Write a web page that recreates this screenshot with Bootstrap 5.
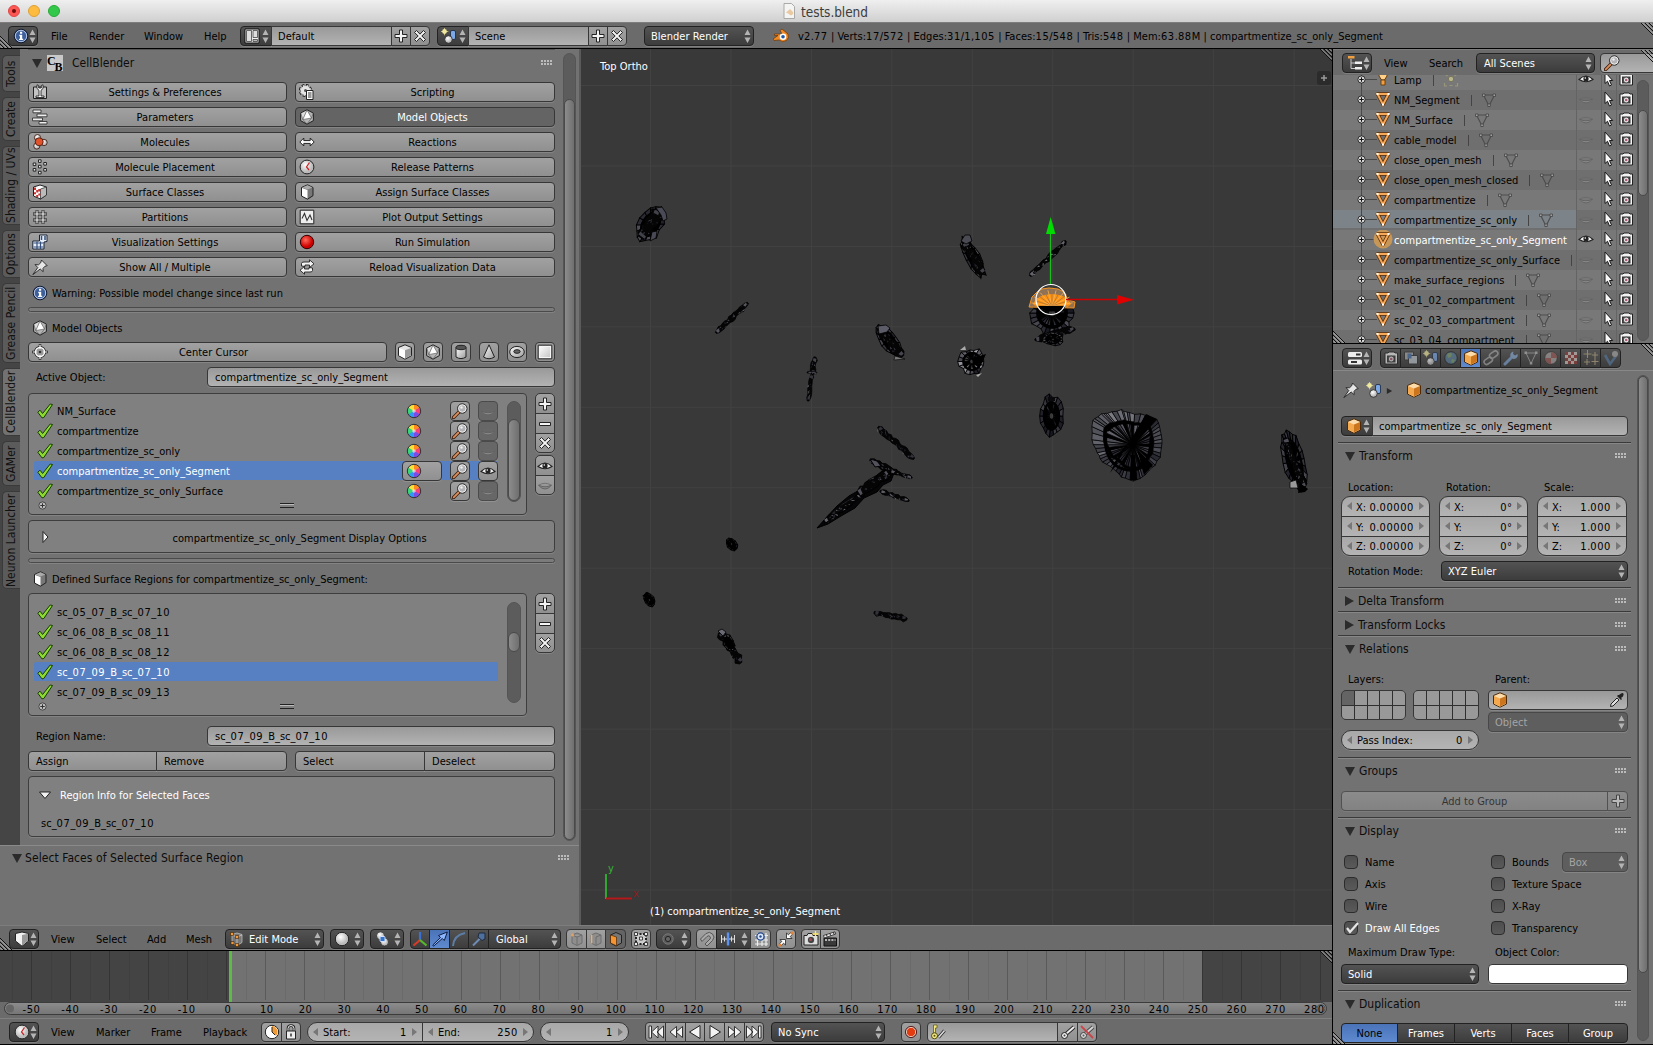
<!DOCTYPE html>
<html lang="en">
<head>
<meta charset="utf-8">
<title>tests.blend</title>
<link rel="stylesheet" href="https://cdn.jsdelivr.net/npm/bootstrap@5.3.0/dist/css/bootstrap.min.css">
<style>
:root{--fs:11px;--hfs:12px}
html,body{height:100%}
body{margin:0;overflow:hidden;background:#000;color:#000;font:var(--fs)/18px "DejaVu Sans Condensed","DejaVu Sans",sans-serif;font-stretch:condensed;letter-spacing:.02px;width:1653px;height:1045px}
body *{box-sizing:border-box}
svg{display:block;flex:none}
.ic{width:16px;height:16px;overflow:visible}
.ud{width:7px;height:16px;flex:none}
.dg,.tk{letter-spacing:.6px}
.titlebar{height:22px;background:linear-gradient(#efefef,#d0d0d0);font-size:13.5px;color:#3c3c3c;padding-left:8px}
.light{width:12px;height:12px;border-radius:50%;margin-right:8px}
.hdr{background:#6b6b6b;border-top:1px solid #7d7d7d;padding-top:1px}
.main{height:996px}
.leftcol{width:1332px}
.rightcol{width:320px;margin-left:1px;background:#727272}
.w{height:20px;border:1px solid #373737;border-radius:4px;background:linear-gradient(#a1a1a1,#909090);box-shadow:0 1px 0 rgba(255,255,255,.14);display:flex;align-items:center;white-space:nowrap;flex:none;position:relative;padding:2px 0 0}
.w .ic,.w .ud{margin-top:-2px}
.w.on{background:#646464;color:#fff}
.w.dk{background:linear-gradient(#535353,#3c3c3c);border-color:#222;color:#fff}
.w.blue{background:linear-gradient(#4a73b8,#5f8ad0);border-color:#222}
.w.fld{background:linear-gradient(#999,#b3b3b3)}
.w.num{background:linear-gradient(#a8a8a8,#b4b4b4);border-radius:10px;padding:2px 15px 0;justify-content:space-between}
.w.num:before,.w.num:after{content:"";position:absolute;top:5px;border:4px solid transparent}
.w.num:before{left:1px;border-right:5px solid #777}
.w.num:after{right:1px;border-left:5px solid #777}
.w.dim{background:#5e5e5e;color:#a5a5a5;border-color:#484848}
.w.lowl{background:#676767;border-color:#4b4b4b}
.w.ctr{justify-content:center}
.w>.text-center{padding-right:4px}
.w>.end{margin-left:auto;margin-right:2px}
.join>.w{border-radius:0;margin-right:-1px}
.join>.w:first-child{border-radius:4px 0 0 4px}
.join>.w:last-child{border-radius:0 4px 4px 0;margin-right:0}
.join>.w.num:first-child{border-radius:10px 0 0 10px}
.join>.w.num:last-child{border-radius:0 10px 10px 0}
.vjoin>.w{border-radius:0;height:21px;margin-bottom:-1px;justify-content:center}
.vjoin>.w:first-child{border-radius:5px 5px 0 0}
.vjoin>.w:last-child{border-radius:0 0 5px 5px;margin-bottom:0;height:20px}
.vjoin>.w.num{justify-content:space-between;height:21px}
.vjoin>.w.num:first-child{border-radius:9px 9px 0 0}
.vjoin>.w.num:last-child{border-radius:0 0 9px 9px;height:20px}
.mlabel{position:relative;top:1px;white-space:nowrap;flex:none}
/* tool shelf */
.shelf{width:581px;background:#727272;border-right:2px solid #5a5a5a}
.tabs{width:20px;background:#454545;padding:6px 0 0 2px;height:796px}
.vtab{width:18px;background:#5b5b5b;border:1px solid #3a3a3a;border-left:0;writing-mode:vertical-rl;transform:rotate(180deg);border-radius:0 5px 5px 0;text-align:center;line-height:16px;font-size:12px;color:#111;margin-bottom:5px;white-space:nowrap}
.vtab.act{background:#727272}
.pbody{width:542px;padding:0 7px 0 8px}
.ph{font-size:var(--hfs);color:#0c0c0c;display:flex;align-items:center}
.dots{width:12px;height:6px;margin-left:auto;background:radial-gradient(circle at 1px 1px,#bbb 0 .8px,transparent 1px) 0 0/3px 3px}
.tri-d{width:0;border:5px solid transparent;border-top:9px solid #2b2b2b;border-bottom:0}
.tri-r{width:0;border:5px solid transparent;border-left:9px solid #2b2b2b;border-right:0}
.sepbox{height:5px;border:1px solid #4a4a4a;border-radius:3px;background:#7b7b7b;box-shadow:0 1px 0 rgba(255,255,255,.12)}
.box{border:1px solid #3e3e3e;border-radius:4px;background:#808080;box-shadow:0 1px 0 rgba(255,255,255,.12)}
.lbl{height:20px;display:flex;align-items:center;padding:1px 0 0 0;white-space:nowrap}
.lbl .ic{margin-top:-2px}
.lrow{height:20px;width:464px;display:flex;align-items:center;padding-left:3px;white-space:nowrap}
.lrow.sel{color:#fff;background:linear-gradient(#5680c2,#5680c2) 0 0/100% 19px no-repeat;border-radius:2px}
.lrow>span{margin-left:4px;position:relative;top:1px}
.sb{background:#5c5c5c;border:1px solid #555;border-radius:7px}
.sb>div{background:linear-gradient(90deg,#8c8c8c,#6f6f6f);border:1px solid #4a4a4a;border-radius:7px}
.grip{width:14px;height:5px;border-top:1px solid #222;border-bottom:1px solid #222;background:linear-gradient(#bbb 1px,transparent 1px 2px,transparent 2px)}
.lfoot{height:8px;padding-left:4px}
.shelf .redo{height:80px;border-top:1px solid #8a8a8a;padding:2px 9px 0 10px}
.view{width:751px;background:#393939}
.corner{position:absolute;width:12px;height:12px}
/* timeline */
.tl{height:51px;background:#727272}
.ruler{height:13px;border:1px solid #3c3c3c;border-radius:7px;background:linear-gradient(#8c8c8c,#767676);margin:0 5px 0 4px}
/* outliner */
.orow{height:20px;display:flex;align-items:center;white-space:nowrap;position:relative}
.orow:nth-child(even){background:#6f6f6f}
.orow:nth-child(odd){background:#787878}
.nm{position:relative;top:1px}
.ocell{display:flex;align-items:center;width:243px;height:20px;overflow:hidden;padding-left:20px}
.ocell.hov{background:linear-gradient(#7c8389,#7c8389) 0 0/100% 18px no-repeat}
/* properties */
.sec{border-top:1px solid #3a3a3a;box-shadow:inset 0 1px 0 #878787;margin:0 5px 0 -3px;padding-left:7px}
.sec .ph{height:26px;padding-right:4px}
.chk{width:14px;height:14px;border:1px solid #2c2c2c;border-radius:4px;background:linear-gradient(#4e4e4e,#5a5a5a);flex:none}
.lay{display:grid;grid-template-columns:repeat(5,1fr);background:#2f2f2f;gap:1px;border:1px solid #373737;border-radius:5px;overflow:hidden;height:30px}
.lay>b{background:#999}
</style>
<script src="https://cdn.jsdelivr.net/npm/bootstrap@5.3.0/dist/js/bootstrap.bundle.min.js"></script>
</head>
<body>
<svg width="0" height="0" style="position:absolute">
<defs>
<linearGradient id="gw" x1="0" y1="0" x2="1" y2="1"><stop offset="0" stop-color="#fff"/><stop offset="1" stop-color="#999"/></linearGradient>
<radialGradient id="gr" cx=".4" cy=".35"><stop offset="0" stop-color="#ff6a5a"/><stop offset="1" stop-color="#c00"/></radialGradient>
<radialGradient id="gb" cx=".4" cy=".35"><stop offset="0" stop-color="#fff"/><stop offset="1" stop-color="#bbb"/></radialGradient>
<symbol id="ud" viewBox="0 0 7 16"><path d="M.5 7 3.500 1.500 6.500 7zM.5 9.500 3.500 15 6.500 9.500z" fill="#b4b4b4"/></symbol>
<symbol id="info" viewBox="0 0 16 16"><circle cx="8" cy="8" r="6.800" fill="#3d5f9c" stroke="#10182c"/><circle cx="8" cy="8" r="5.700" fill="none" stroke="#c6d2ea" stroke-width=".9"/><path d="M7 3.800h2.200v2H7zM6.300 6.800H9.200v4h1v1.300H6V10.800h1V8.200h-.7z" fill="#fff"/></symbol>
<symbol id="screen" viewBox="0 0 16 16"><path d="M1 1h14v14H1z" fill="#f2f2f2" stroke="#111"/><path d="M2.500 2.500h5v11h-5zM9 2.500h4.500v7H9z" fill="#ddd" stroke="#444" stroke-width=".8"/><path d="M9 11.500h4.500v2H9z" fill="#bbb" stroke="#444" stroke-width=".8"/></symbol>
<symbol id="scene" viewBox="0 0 16 16"><rect x="9.500" y="2.500" width="5" height="9" rx="1.500" fill="#7da8e6" stroke="#18243c" stroke-width=".8"/><circle cx="7.500" cy="11.500" r="3.800" fill="url(#gb)" stroke="#222" stroke-width=".8"/><circle cx="3.500" cy="3.500" r="2.400" fill="#f2eaa0"/><path d="M3.500-.3v7.600M-.3 3.500h7.600" stroke="#efe89a" stroke-width=".7"/></symbol>
<symbol id="plus" viewBox="0 0 16 16"><path d="M6.500 2h3v4.500H14v3H9.500V14h-3V9.500H2v-3h4.500z" fill="#f4f4f4" stroke="#222"/></symbol>
<symbol id="minus" viewBox="0 0 16 16"><path d="M2.500 6.500h11v3h-11z" fill="#f4f4f4" stroke="#222"/></symbol>
<symbol id="x" viewBox="0 0 16 16"><path d="M2.500 4.500 4.500 2.500 8 6.200 11.500 2.500 13.500 4.500 9.800 8 13.500 11.500 11.500 13.500 8 9.800 4.500 13.500 2.500 11.500 6.200 8z" fill="#f4f4f4" stroke="#222"/></symbol>
<symbol id="blender" viewBox="0 0 16 16"><path d="M7 2.500 9 1l6 5q1.500 4-1.500 6.500-4 2.500-7.500-.5L1 12.500 0 11l5-3.500H1.500V6H9z" fill="#ef8a24" stroke="#6a3206" stroke-width=".7"/><circle cx="10" cy="8.800" r="3.300" fill="#fff"/><circle cx="10" cy="8.800" r="1.800" fill="#22589c"/></symbol>
<symbol id="doc" viewBox="0 0 16 16"><path d="M3 .5h7.500l3 3v12H3z" fill="#f4f4f2" stroke="#999" stroke-width=".8"/><path d="M5 9.500 9 6l3 3a2 2 0 0 1-4 2z" fill="#e9c9a2"/></symbol>
<symbol id="wrench" viewBox="0 0 16 16"><path d="M1.500 3h13v11.500h-13z" fill="#c4c4c4" stroke="#222"/><path d="M5 .8v3.700L7 6.300V12H4v1.500h8V12H9V6.300l2-1.800V.8L9.300 1.500V4H6.700V1.500z" fill="#fff" stroke="#111" stroke-width=".8"/></symbol>
<symbol id="script" viewBox="0 0 16 16"><circle cx="6.500" cy="6.500" r="5" fill="none" stroke="#222" stroke-width="3.200" stroke-dasharray="2.400 1.500"/><circle cx="6.500" cy="6.500" r="4.600" fill="#e4e4e4" stroke="#e4e4e4" stroke-width="2" stroke-dasharray="1.600 2.100"/><circle cx="6.500" cy="6.500" r="1.500" fill="#555"/><path d="M7.500 6.500H14v9H7.500z" fill="#fff" stroke="#222"/><path d="M9 9h3.500M9 11h3.500M9 13h3.500" stroke="#333"/></symbol>
<symbol id="params" viewBox="0 0 16 16"><g fill="#eee" stroke="#333" stroke-width=".9"><path d="M1 1h8v2.800H1zM5 5h10v2.800H5zM.5 9h10v2.800H.5zM7 12.500h8v2.500H7z"/></g></symbol>
<symbol id="mol" viewBox="0 0 16 16"><g stroke="#3a1208" stroke-width=".8"><circle cx="5.500" cy="3.600" r="3.100" fill="url(#gb)"/><circle cx="4.800" cy="12" r="3.100" fill="url(#gb)"/><circle cx="12" cy="8.500" r="3.200" fill="url(#gb)"/><circle cx="7.200" cy="7.800" r="4" fill="#e2532c"/></g></symbol>
<symbol id="place" viewBox="0 0 16 16"><g fill="#eee" stroke="#222"><path d="M6.500.800h2.600v2.600H6.500zM1.200 4h2.600v2.600H1.200zM11.800 3.500h2.600v2.600h-2.600zM6.500 6.300h2.600v2.600H6.500zM1.200 9.500h2.600v2.600H1.200zM11.800 9.500h2.600v2.600h-2.600zM6.500 12.300h2.600v2.600H6.500z"/></g></symbol>
<symbol id="surf" viewBox="0 0 16 16"><path d="M1.500 3 8 1l6.500 2v8L8.500 15l-7-3z" fill="#fff" stroke="#222"/><path d="M8.500 5l6-2v8l-6 4z" fill="#bbb" stroke="#222" stroke-width=".7"/><path d="M2 3.500h2v2.500H2zM6.300 5h2v2.500h-2zM4.200 6h2v2.500h-2zM2 8.300h2v2H2zM6.300 9.500h2v2h-2zM4.200 11h2v2h-2z" fill="#c33"/></symbol>
<symbol id="hash" viewBox="0 0 16 16"><path d="M5 1v14M11 1v14M1 5h14M1 11h14" stroke="#222" stroke-width="2.800"/><path d="M5 1.500v13M11 1.500v13M1.500 5h13M1.500 11h13" stroke="#eee" stroke-width="1.200"/></symbol>
<symbol id="film" viewBox="0 0 16 16"><path d="M7.500 1H15v6.500l-3 .5v7H.8V7h6.700z" fill="#e8eef8" stroke="#1a2436"/><path d="M1.500 9h10M1.500 13h10M5 7.500V15M8.500 7.500V15" stroke="#33507c" stroke-width="1.200"/><path d="M9.500 2v4M13 2v4" stroke="#33507c" stroke-width="1.500"/></symbol>
<symbol id="pin" viewBox="0 0 16 16"><path d="M9.500 1 15.200 6.700l-2.200.5-2 2.200.2 3.300-3-2.700L.8 15.700l5-7.200L3 5.600l3.500.2 2.200-2z" fill="#e6e6e6" stroke="#222" stroke-width=".9" stroke-linejoin="round"/></symbol>
<symbol id="ico" viewBox="0 0 16 16"><path d="M8 .8l6.400 3.300v7.500L8 15.200l-6.400-3.600V4.100z" fill="#b4b4b4" stroke="#222"/><path d="M8 1.500 3.800 10.500 12.500 9z" fill="#fff"/><path d="M2.100 4.500 3.600 10.200 7.500 1.700z" fill="#ddd"/><path d="M1.800 4.200 3.800 10.500 8 15l4.500-6 1.700-4.800M3.800 10.500 12.500 9 8 1z" fill="none" stroke="#555" stroke-width=".6"/></symbol>
<symbol id="react" viewBox="0 0 16 16"><path d="M.8 8 4.800 4v2.600h6.400V4L15.200 8l-4 4V9.400H4.800V12z" fill="#fff" stroke="#222"/></symbol>
<symbol id="clock" viewBox="0 0 16 16"><circle cx="8" cy="8" r="6.900" fill="url(#gb)" stroke="#222"/><path d="M10.500 3.500 7.500 8l2.500 3" stroke="#c22" stroke-width="1.200" fill="none"/></symbol>
<symbol id="cube" viewBox="0 0 16 16"><path d="M8 .8l6.500 2.700v8.200L8 15.200l-6.500-3.500V3.500z" fill="#e4e4e4" stroke="#222"/><path d="M2 4 8 6.300V14.500l-6-3.200z" fill="#fff"/><path d="M14 4 8 6.300V14.500l6-3.200z" fill="#9a9a9a"/></symbol>
<symbol id="cube2" viewBox="0 0 16 16"><path d="M2.500 3.500 8.500.8l5.500 2.700v8.200L8.500 15.200l-6-3.200z" fill="#777" stroke="#222"/><path d="M3 4 8.500 6v8.500L3 11.700z" fill="#fff"/><path d="M3 3.500 8.500 1.300l5 2.200-5 2z" fill="#aaa"/></symbol>
<symbol id="ocube" viewBox="0 0 16 16"><path d="M8 .8l6.500 2.700v8.500L8 15.200l-6.500-3.200V3.500z" fill="#fddcab" stroke="#4e2a06"/><path d="M2 4 8 6.600v7.900l-6-3z" fill="#f5a94e"/><path d="M14 4 8 6.600v7.900l6-3z" fill="#cb751e"/></symbol>
<symbol id="plot" viewBox="0 0 16 16"><path d="M1.200 1.200h13.600v13.600H1.200z" fill="#eee" stroke="#222"/><path d="M3 9.500 5.500 4.500l2.500 7 3-5.500 2 5" fill="none" stroke="#333" stroke-width="1.100"/></symbol>
<symbol id="rec" viewBox="0 0 16 16"><circle cx="8" cy="8" r="6.700" fill="url(#gr)" stroke="#300"/></symbol>
<symbol id="rec2" viewBox="0 0 16 16"><circle cx="8" cy="8" r="4.700" fill="#e23c10" stroke="#f4cfc0" stroke-width="1"/><circle cx="8" cy="8" r="5.600" fill="none" stroke="#400" stroke-width=".8"/></symbol>
<symbol id="reload" viewBox="0 0 16 16"><path d="M2.500 7V4.500Q2.500 3 5 3h5.500V.8L15 4.800 10.500 8.500V6H6v1.500zM13.500 9v2.500q0 1.500-2.500 1.500H5.500v2.200L1 11.200 5.500 7.500V10H10V8.500z" fill="#f4f4f4" stroke="#222" stroke-width=".9"/></symbol>
<symbol id="cursor3d" viewBox="0 0 16 16"><circle cx="8" cy="8" r="4.500" fill="none" stroke="#222" stroke-width="3"/><path d="M8 0v16M0 8h16" stroke="#222" stroke-width="2.500"/><circle cx="8" cy="8" r="4.500" fill="#999" stroke="#fff" stroke-width="1.400"/><path d="M8 .7v4M8 11.300v4M.7 8h4M11.300 8h4" stroke="#fff" stroke-width="1.200"/><circle cx="8" cy="8" r="1.300" fill="#333"/></symbol>
<symbol id="cyl" viewBox="0 0 16 16"><path d="M3 3.500v9.500q5 3.200 10 0V3.500z" fill="url(#gw)" stroke="#222"/><ellipse cx="8" cy="3.500" rx="5" ry="2.200" fill="#555" stroke="#222"/></symbol>
<symbol id="cone" viewBox="0 0 16 16"><path d="M8 .8 2.500 13q5.500 3.500 11 0z" fill="url(#gw)" stroke="#222"/></symbol>
<symbol id="torus" viewBox="0 0 16 16"><ellipse cx="8" cy="8" rx="7.300" ry="5.600" fill="url(#gw)" stroke="#222"/><ellipse cx="8" cy="7.500" rx="3.200" ry="1.800" fill="#666" stroke="#222"/></symbol>
<symbol id="plane" viewBox="0 0 16 16"><path d="M1.200 1.200h13.600v13.600H1.200z" fill="#f6f6f6" stroke="#222"/><path d="M3 3h10v10H3z" fill="url(#gw)" opacity=".5"/></symbol>
<symbol id="check" viewBox="0 0 16 16"><path d="M.8 9.200 3 7.200l2.600 3.300L13.200 1l2.300.5L6.800 14.500 5 14.900z" fill="#8bdc2e" stroke="#173b04"/></symbol>
<symbol id="eye" viewBox="0 0 16 16"><path d="M1 8.500Q8 1.500 15 8.500 8 13 1 8.500z" fill="#f6f6f6" stroke="#222" stroke-width="1.100"/><circle cx="8" cy="7.700" r="2.600" fill="#222"/><circle cx="7.300" cy="7" r=".8" fill="#fff"/></symbol>
<symbol id="eyec" viewBox="0 0 16 16"><path d="M1.500 8Q4 12 8 12t6.500-4Q11 10 8 9.800 5 10 1.500 8z" fill="#8c8c8c" stroke="#606060" stroke-width=".9"/><path d="M2 8q6-3.500 12 0" fill="none" stroke="#6a6a6a" stroke-width=".8"/></symbol>
<symbol id="lens" viewBox="0 0 16 16"><path d="M1.500 14.500 7 9" stroke="#3b1d0c" stroke-width="3.400" stroke-linecap="round"/><path d="M1.700 14.300 7 9" stroke="#d98e5c" stroke-width="1.800" stroke-linecap="round"/><circle cx="10.300" cy="5.500" r="4.700" fill="#b4b4b8" stroke="#222"/><circle cx="10.300" cy="5.500" r="3.700" fill="none" stroke="#f4f4f4" stroke-width=".9"/><circle cx="9.500" cy="4.500" r="1.200" fill="#eee"/></symbol>
<symbol id="cw" viewBox="0 0 16 16"><g><path d="M8 8V1.500A6.500 6.500 0 0 1 13.600 4.700z" fill="#ff8a20"/><path d="M8 8l5.600-3.300a6.500 6.500 0 0 1 0 6.500z" fill="#ff3b78"/><path d="M8 8l5.600 3.200A6.500 6.500 0 0 1 8 14.500z" fill="#7a4be8"/><path d="M8 8v6.500a6.500 6.500 0 0 1-5.600-3.300z" fill="#2f9bf0"/><path d="M8 8l-5.600 3.200a6.500 6.500 0 0 1 0-6.500z" fill="#38d878"/><path d="M8 8 2.400 4.700A6.500 6.500 0 0 1 8 1.500z" fill="#f4e23c"/></g><circle cx="8" cy="8" r="1.800" fill="#fff" opacity=".6"/><circle cx="8" cy="8" r="6.700" fill="none" stroke="#333"/></symbol>
<symbol id="shape" viewBox="0 0 16 16"><path d="M1.500 2.500 8 1l6.500 1.500V10L8 15.200 1.500 10z" fill="#f2f2f2" stroke="#222"/><path d="M8 4l6-1.200v7L8 14.500z" fill="#999"/></symbol>
<symbol id="tree" viewBox="0 0 16 16"><path d="M4 4v9.500h4M4 8h4" stroke="#ccc" fill="none"/><path d="M1 1h6.500v2.500H1z" fill="#f0a040"/><path d="M8 6.500h7V9H8zM8 12h7v2.500H8z" fill="#eee"/></symbol>
<symbol id="props" viewBox="0 0 16 16"><rect x="1" y="2" width="14" height="5" rx="1.500" fill="#eee"/><rect x="1" y="9.500" width="14" height="5" rx="1.500" fill="#eee"/><path d="M9 3.500h4.500v2H9zM4 11h6v2H4z" fill="#333"/></symbol>
<symbol id="edit" viewBox="0 0 16 16"><path d="M3 3.500 8 2l5 1.500v8L8 14.500l-5-3z" fill="#777" stroke="#bbb" stroke-width=".8"/><path d="M3 4l5 2 5-2M8 6v8" stroke="#ccc" fill="none" stroke-width=".8"/><path d="M1.500 1.500h3v3h-3zM6.500 4.500h3v3h-3zM2 10.500h3v3H2zM6.500 12.500h3v3h-3z" fill="#f29a3a" stroke="#3a1c00" stroke-width=".6"/></symbol>
<symbol id="ball" viewBox="0 0 16 16"><circle cx="8" cy="8" r="6.700" fill="url(#gb)" stroke="#222"/></symbol>
<symbol id="pivot" viewBox="0 0 16 16"><circle cx="6.500" cy="4.800" r="4" fill="url(#gb)" stroke="#222" stroke-width=".7"/><circle cx="10.500" cy="11" r="4" fill="url(#gb)" stroke="#222" stroke-width=".7"/><rect x="6" y="5.500" width="5" height="5" rx="1" fill="#3272c8" stroke="#dce8ff" stroke-width=".9"/></symbol>
<symbol id="axes" viewBox="0 0 16 16"><path d="M8 9V1" stroke="#3b6fd0" stroke-width="2.200"/><path d="M8 9 1.500 14.500" stroke="#d83a28" stroke-width="2.200"/><path d="m8 9 6.500 5.500" stroke="#54b92d" stroke-width="2.200"/></symbol>
<symbol id="arrow" viewBox="0 0 16 16"><path d="M1.500 15.200.8 14 8.500 6.500 6.500 4.500 15.300 1l-3 8.500-2-2z" fill="#8db6ff" stroke="#0c1d44"/></symbol>
<symbol id="arc" viewBox="0 0 16 16"><path d="M2 15Q3 4 14 2" stroke="#5d7da6" stroke-width="2" fill="none"/></symbol>
<symbol id="scl" viewBox="0 0 16 16"><path d="M2 14.500 9 7.500" stroke="#6f8cb4" stroke-width="2"/><path d="M8 2h6v6l-3 1.500L7 6z" fill="#4f6f9c" stroke="#1d2a3f"/></symbol>
<symbol id="mv" viewBox="0 0 16 16"><path d="M3 4 8 2l5 2v8l-5 2.500L3 12zM3 4l5 2 5-2M8 6v8" fill="#8e8e8e" stroke="#6c6c6c"/><circle cx="3.500" cy="4" r="1.600" fill="#e0a060"/></symbol>
<symbol id="me" viewBox="0 0 16 16"><path d="M3 4 8 2l5 2v8l-5 2.500L3 12zM8 6l5-2M8 6v8" fill="#8e8e8e" stroke="#6c6c6c"/><path d="M3.500 3.500v9" stroke="#e0b080" stroke-width="1.500"/></symbol>
<symbol id="mf" viewBox="0 0 16 16"><path d="M2.500 4 8 1.500l5.500 2.500v8L8 15l-5.500-3z" fill="#777" stroke="#222"/><path d="M2.500 4l6 2v8.800l-6-2.800z" fill="#f49432" stroke="#4c2604" stroke-width=".7"/></symbol>
<symbol id="occl" viewBox="0 0 16 16"><path d="M3 3h10v10H3z" fill="#ccc" stroke="#222" stroke-width="2" stroke-dasharray="2 1.500"/><path d="M1.500 1.500h3v3h-3zM11.500 1.500h3v3h-3zM1.500 11.500h3v3h-3zM11.500 11.500h3v3h-3zM6.500 6h3v3h-3z" fill="#eee" stroke="#222" stroke-width=".8"/></symbol>
<symbol id="prop" viewBox="0 0 16 16"><circle cx="8" cy="8" r="5.200" fill="#5c5c5c" stroke="#777"/><circle cx="8" cy="8" r="2.600" fill="#666" stroke="#222"/></symbol>
<symbol id="magnet" viewBox="0 0 16 16"><path d="M3 10.500 8 5.500q2-1.500 3 0t0 2.500l-5 5 2 2 5.500-5.500q3-3.500 0-6.500t-6.500-.5L1.500 8z" fill="#aaa" stroke="#555"/></symbol>
<symbol id="snapi" viewBox="0 0 16 16"><path d="M1.500 4v8M14.500 4v8M4.500 5.500v5M11.500 5.500v5M1.500 8h13" stroke="#ddd"/><path d="M8 1.500v13" stroke="#5b93f0" stroke-width="2.400"/></symbol>
<symbol id="snapg" viewBox="0 0 16 16"><path d="M2 4.500h13M2 9h13M2 13h13M4.500 2v13M9 2v13M13 2v13" stroke="#eee" stroke-width="1.200"/><circle cx="7.500" cy="5.500" r="3.600" fill="#dce8fa" stroke="#24498c" stroke-width="1.300"/><circle cx="7.500" cy="5.500" r="1.200" fill="#24498c"/></symbol>
<symbol id="snapt" viewBox="0 0 16 16"><path d="M8.500 7.500V2l2 1.800L13 1.200 14.800 3l-2.600 2.500L14 7.500zM7.500 8.500V14l-2-1.800L3 14.800 1.200 13l2.600-2.500L2 8.500z" fill="#fff" stroke="#222" stroke-width=".8"/><circle cx="14" cy="2" r="1.600" fill="#e58334"/><circle cx="2" cy="14" r="1.600" fill="#e58334"/></symbol>
<symbol id="cam" viewBox="0 0 16 16"><path d="M1 4.500h3l1-2h4l1 2h5V14H1z" fill="#ddd" stroke="#222"/><circle cx="8" cy="9" r="3.800" fill="#444" stroke="#fff" stroke-width=".8"/><circle cx="7.500" cy="8.500" r="1.500" fill="#a05058"/><path d="M12.500 0v6M9.500 3h6" stroke="#ffe56a" stroke-width="1.300"/></symbol>
<symbol id="clap" viewBox="0 0 16 16"><path d="M2 7h12.500v8H2z" fill="#3a3a3a" stroke="#111"/><path d="M1.500 4.500 13 .8l.8 2.200L2.300 7z" fill="#eee" stroke="#222" stroke-width=".8"/><path d="M3 9h10.500" stroke="#ddd" stroke-width="1.500" stroke-dasharray="2 1.200"/><path d="M5 5.500l-.5-2M8.500 4.500l-.5-2M12 3.300l-.5-2" stroke="#222"/></symbol>
<symbol id="rcam" viewBox="0 0 16 16"><path d="M2 3h3l1-1h5l1 1h2.500v11h-12.500z" fill="#f2f2f2" stroke="#222"/><path d="M4 5.500h8.500v7H4z" fill="#3a3a3a"/><circle cx="8.200" cy="9" r="2.900" fill="#e8e8e8" stroke="#222" stroke-width=".7"/><circle cx="8.200" cy="9" r="1.300" fill="#b05a74"/></symbol>
<symbol id="ptr" viewBox="0 0 16 16"><path d="M5 1v11.500l2.500-2.200 2 4.700 2-1-2-4.500h3.200z" fill="#f8f8f8" stroke="#1a1a1a"/></symbol>
<symbol id="omesh" viewBox="0 0 16 16"><path d="M2.500 3h11L8 13.500z" fill="none" stroke="#5b2e06" stroke-width="3.600" stroke-linejoin="round"/><path d="M2.500 3h11L8 13.500z" fill="none" stroke="#f5a85a" stroke-width="2"/><path d="M1.500 2h2v2h-2zM12.500 2h2v2h-2zM7 12.500h2v2H7z" fill="#fff"/></symbol>
<symbol id="gmesh" viewBox="0 0 16 16"><path d="M2.500 3h11L8 14z" fill="none" stroke="#4c4c4c" stroke-width="1.100"/><path d="M1.500 2h2.500v2.500H1.500zM12 2h2.500v2.500H12zM6.800 12h2.500v2.500H6.800z" fill="#a0a0a0" stroke="#444" stroke-width=".8"/></symbol>
<symbol id="lampo" viewBox="0 0 16 16"><path d="M4 1h8v4l-2.500 4h-3L4 5z" fill="#ffd08a" stroke="#6a3a06"/><path d="M6 9h4v5H6z" fill="#f0a040" stroke="#5a3006" stroke-width=".8"/></symbol>
<symbol id="lampg" viewBox="0 0 16 16"><circle cx="8" cy="7" r="2.700" fill="#b7b48e" stroke="#77755a"/><path d="M2 2l2.500 2M14 2l-2.500 2M1.500 11v3H4M14.500 11v3H12M6.500 13.500h3" stroke="#99967a" stroke-width="1.200" fill="none"/></symbol>
<symbol id="exp" viewBox="0 0 10 10"><circle cx="5" cy="5" r="4" fill="#ddd" stroke="#222"/><path d="M5 2.500v5M2.500 5h5" stroke="#111" stroke-width="1.200"/></symbol>
<symbol id="rl" viewBox="0 0 16 16"><path d="M1.500 2h9v8h-9z" fill="#aaa" stroke="#333"/><path d="M5.500 5.500h9V14h-9z" fill="#bcc4cc" stroke="#333"/><path d="M4.500 3.500h4v5h-4z" fill="#4c74ac"/></symbol>
<symbol id="world" viewBox="0 0 16 16"><circle cx="8" cy="8" r="6.300" fill="#5c7f9c" stroke="#222"/><path d="M4 4q3-2 5 0l-1 3-3 1zM9 9l3 1-2 3-2-1z" fill="#7ea06c"/></symbol>
<symbol id="chain" viewBox="0 0 16 16"><g fill="none" stroke="#a4a4a4" stroke-width="1.600"><rect x="6.500" y="2" width="9" height="5" rx="2.500" transform="rotate(-35 11 5)"/><rect x=".8" y="8.500" width="9" height="5" rx="2.500" transform="rotate(-35 5 11)"/></g></symbol>
<symbol id="spanner" viewBox="0 0 16 16"><path d="M2 14 10 6" stroke="#7da2cf" stroke-width="3" stroke-linecap="round"/><path d="M14.500 4a3.700 3.700 0 1 1-4-2.500L10 4l2 1.500z" fill="#8aaad2"/></symbol>
<symbol id="dmesh" viewBox="0 0 16 16"><path d="M3 3h10L8 13.500z" fill="none" stroke="#a5a5a5"/><path d="M1.500 1.500H4V4H1.500zM12 1.500h2.500V4H12zM6.800 12h2.500v2.500H6.800z" fill="#b5b5b5"/></symbol>
<symbol id="mat" viewBox="0 0 16 16"><circle cx="8" cy="8" r="6.300" fill="#a8a0a0" stroke="#333"/><path d="M8 8V2a6 6 0 0 1 6 6zM8 8v6a6 6 0 0 1-6-6z" fill="#9c5a56"/></symbol>
<symbol id="tex" viewBox="0 0 16 16"><path d="M2 2h12v12H2z" fill="#d0c4c0"/><path d="M2 2h3v3H2zM8 2h3v3H8zM5 5h3v3H5zM11 5h3v3h-3zM2 8h3v3H2zM8 8h3v3H8zM5 11h3v3H5zM11 11h3v3h-3z" fill="#943c38"/></symbol>
<symbol id="part" viewBox="0 0 16 16"><path d="M4.500 0v8M.5 4h8M12 2v6M9 5h6M4 9v6M1 12h6M12 8v7M8.500 11.500h7" stroke="#b5a682" stroke-width="1.100"/></symbol>
<symbol id="phys" viewBox="0 0 16 16"><path d="M2 5l5 9 6-8" stroke="#56789c" stroke-width="2.600" fill="none"/><circle cx="12" cy="4" r="3" fill="#a8a8a8"/></symbol>
<symbol id="drop" viewBox="0 0 16 16"><path d="M1.500 14.500 2 12l6-6 2 2-6 6z" fill="#ddd" stroke="#111" stroke-width=".9"/><path d="M8 4l4 4 1-1-1-1q3-1.500 2.500-4T10 3L9 3z" fill="#222"/></symbol>
<symbol id="tlc" viewBox="0 0 16 16"><circle cx="8" cy="8" r="6.700" fill="#fff" stroke="#222"/><path d="M8 8V2a6 6 0 0 1 4 10z" fill="#f29a34"/><path d="M8 3v5l3 3" stroke="#222" fill="none"/></symbol>
<symbol id="lock" viewBox="0 0 16 16"><path d="M5 7V4.500q0-3 3-3t3 3V7" fill="none" stroke="#222" stroke-width="2.600"/><path d="M5 7V4.500q0-3 3-3t3 3V7" fill="none" stroke="#eee"/><path d="M3.500 7h9v8h-9z" fill="#eee" stroke="#222"/><path d="M8 9.500v3" stroke="#222" stroke-width="1.400"/></symbol>
<g id="fwdshape" fill="#f4f4f4" stroke="#222" stroke-width=".9"><path d="M1.500 2.500v11L8 8zM7.500 2.500v11L14 8z"/></g>
<symbol id="ff" viewBox="0 0 16 16"><use href="#fwdshape"/></symbol>
<symbol id="rw" viewBox="0 0 16 16"><use href="#fwdshape" transform="matrix(-1 0 0 1 16 0)"/></symbol>
<symbol id="last" viewBox="0 0 16 16"><path d="M.5 2v12L7 8zM6 2v12l6.500-6zM12.500 2h2.500v12h-2.500z" fill="#f4f4f4" stroke="#222" stroke-width=".9"/></symbol>
<symbol id="first" viewBox="0 0 16 16"><path d="M15.500 2v12L9 8zM10 2v12L3.500 8zM1 2h2.500v12H1z" fill="#f4f4f4" stroke="#222" stroke-width=".9"/></symbol>
<symbol id="play" viewBox="0 0 16 16"><path d="M3 1.500v13L13.500 8z" fill="#f4f4f4" stroke="#222"/></symbol>
<symbol id="back" viewBox="0 0 16 16"><path d="M13 1.500v13L2.500 8z" fill="#f4f4f4" stroke="#222"/></symbol>
<symbol id="keyset" viewBox="0 0 16 16"><path d="M3.500 9V1h3.500v3H5.500v5z" fill="#f4e884" stroke="#55500c" stroke-width=".7"/><circle cx="4.500" cy="11.800" r="3" fill="#f4e884" stroke="#55500c"/><circle cx="4.500" cy="11.800" r="1" fill="#55500c"/><path d="M8.500 13.500 14.500 6.500" stroke="#222" stroke-width="3.200"/><path d="M8.500 13.500 14.500 6.500" stroke="#ddd" stroke-width="1.600"/></symbol>
<symbol id="key" viewBox="0 0 16 16"><path d="M5.500 10.500 14 3" stroke="#222" stroke-width="3.800"/><path d="M5.500 10.500 14 3" stroke="#eee" stroke-width="2"/><circle cx="4.500" cy="11.500" r="3" fill="#eee" stroke="#222"/><circle cx="4.500" cy="11.500" r="1" fill="#444"/></symbol>
<symbol id="keyx" viewBox="0 0 16 16"><use href="#key" width="16" height="16" opacity=".7"/><path d="M2 2l12 12" stroke="#c8444a" stroke-width="1.800"/></symbol>
<symbol id="td" viewBox="0 0 16 16"><path d="M2.500 5h11L8 11.500z" fill="#f2f2f2" stroke="#222"/></symbol>
<symbol id="tr" viewBox="0 0 16 16"><path d="M6 2.500v11L11 8z" fill="#f2f2f2" stroke="#222"/></symbol>
<symbol id="cb" viewBox="0 0 16 16"><path d="M0 0h16v16H0z" fill="#c9c9c9"/><text x="0" y="10" font-family="Liberation Serif" font-weight="bold" font-size="12">C</text><text x="7.500" y="15.500" font-family="Liberation Serif" font-weight="bold" font-size="12">B</text></symbol>
<symbol id="cnr" viewBox="0 0 12 12"><path d="M0 0 12 12M4 0l8 8M8 0l4 4" stroke="#111" stroke-width="1"/><path d="M1.500 0 12 10.500M5.500 0 12 6.500M9.500 0 12 2.500" stroke="#c4c4c4" stroke-width=".9"/></symbol>
<symbol id="cnl" viewBox="0 0 12 12"><path d="M0 0 12 12M0 4l8 8M0 8l4 4" stroke="#111" stroke-width="1"/><path d="M0 1.500 10.500 12M0 5.500 6.500 12M0 9.500 2.500 12" stroke="#c4c4c4" stroke-width=".9"/></symbol>
</defs></svg>

<div class="titlebar d-flex align-items-center position-relative">
  <div class="light" style="background:#fc5753;border:1px solid #df4744"><div class="rounded-circle" style="width:4px;height:4px;margin:3px;background:#6b0d0b"></div></div>
  <div class="light" style="background:#fdbc40;border:1px solid #de9f34"></div>
  <div class="light" style="background:#34c84a;border:1px solid #27aa35"></div>
  <div class="d-flex align-items-center" style="margin-left:713px"><i data-i="doc"></i><span style="margin-left:4px;letter-spacing:-.05px" class="mlabel">tests.blend</span></div>
</div>

<header class="hdr d-flex align-items-center position-relative" style="height:26px;padding-left:8px">
  <div class="w dk" style="width:30px;padding-left:4px"><i data-i="info"></i><i data-i="ud" class="end"></i></div>
  <span class="mlabel" style="margin-left:13px;width:38px">File</span><span class="mlabel" style="width:55px">Render</span><span class="mlabel" style="width:60px">Window</span><span class="mlabel" style="width:36px">Help</span>
  <div class="join d-flex">
    <div class="w dk" style="width:32px;padding-left:3px"><i data-i="screen"></i><i data-i="ud" class="end"></i></div>
    <div class="w fld" style="width:121px;padding-left:6px">Default</div>
    <div class="w ctr" style="width:20px"><i data-i="plus"></i></div><div class="w ctr" style="width:20px"><i data-i="x"></i></div>
  </div>
  <div class="join d-flex" style="margin-left:7px">
    <div class="w dk" style="width:32px;padding-left:3px"><i data-i="scene"></i><i data-i="ud" class="end"></i></div>
    <div class="w fld" style="width:121px;padding-left:6px">Scene</div>
    <div class="w ctr" style="width:20px"><i data-i="plus"></i></div><div class="w ctr" style="width:20px"><i data-i="x"></i></div>
  </div>
  <div class="w dk" style="width:110px;margin-left:17px;padding-left:6px">Blender Render<i data-i="ud" class="end"></i></div>
  <i data-i="blender" style="margin-left:19px"></i>
  <span class="mlabel" style="margin-left:9px">v2.77 | Verts:17/572 | Edges:31/1,105 | Faces:15/548 | Tris:548 | Mem:63.88M | compartmentize_sc_only_Segment</span>
  <svg class="corner" style="right:0;top:0"><use href="#cnr"/></svg>
  <svg class="corner" style="left:0;bottom:0"><use href="#cnl"/></svg>
</header>

<div class="main d-flex" style="border-top:1px solid #000">
 <div class="leftcol d-flex flex-column">
  <div class="d-flex" style="height:876px">
   <aside class="shelf">
    <div class="d-flex" style="height:796px">
     <div class="tabs" id="tabs"></div>
     <div class="pbody">
      <div class="ph" style="height:29px;padding:0 0 2px 4px;border-top:1px solid #555"><div class="tri-d"></div><i data-i="cb" style="margin-left:5px"></i><span style="margin-left:9px">CellBlender</span><div class="dots" style="margin-right:2px"></div></div>
      <div class="d-flex flex-wrap" id="mods" style="padding-top:4px;gap:5px 8px"></div>
      <div class="lbl" style="margin-top:6px;padding-left:4px"><i data-i="info"></i><span style="margin-left:4px">Warning: Possible model change since last run</span></div>
      <div class="sepbox" style="margin-top:4px"></div>
      <div class="lbl" style="margin-top:6px;padding-left:4px"><i data-i="ico"></i><span style="margin-left:4px">Model Objects</span></div>
      <div class="d-flex justify-content-between" style="margin-top:4px">
       <div class="w" style="width:359px;padding-left:3px"><i data-i="cursor3d"></i><span class="flex-fill text-center" style="padding-right:7px">Center Cursor</span></div>
       <div class="w ctr" style="width:20px"><i data-i="cube"></i></div><div class="w ctr" style="width:20px"><i data-i="ico"></i></div><div class="w ctr" style="width:20px"><i data-i="cyl"></i></div><div class="w ctr" style="width:20px"><i data-i="cone"></i></div><div class="w ctr" style="width:20px"><i data-i="torus"></i></div><div class="w ctr" style="width:20px"><i data-i="plane"></i></div>
      </div>
      <div class="d-flex" style="margin-top:5px"><span class="lbl" style="width:179px;padding:2px 0 0 8px">Active Object:</span><div class="w fld flex-fill" style="padding-left:7px">compartmentize_sc_only_Segment</div></div>
      <div class="d-flex justify-content-between" style="margin-top:6px">
       <div class="box d-flex" style="width:499px;height:122px;padding:7px 5px 0">
        <div><div id="objs"></div><div class="d-flex align-items-center lfoot"><svg width="9" height="9" opacity=".7"><use href="#exp"/></svg><div class="grip" style="margin-left:233px"></div></div></div>
        <div class="sb" style="width:14px;height:101px;margin-left:9px;padding-top:17px"><div class="h-100"></div></div>
       </div>
       <div><div class="vjoin" style="width:20px"><div class="w"><i data-i="plus"></i></div><div class="w"><i data-i="minus"></i></div><div class="w"><i data-i="x"></i></div></div>
       <div class="vjoin" style="width:20px;margin-top:2px"><div class="w"><i data-i="eye"></i></div><div class="w"><i data-i="eyec"></i></div></div></div>
      </div>
      <div class="box d-flex align-items-center" style="height:33px;margin-top:5px;padding:4px 0 0 8px"><i data-i="tr" style="margin-top:-3px"></i><span class="flex-fill text-center" style="padding-right:8px">compartmentize_sc_only_Segment Display Options</span></div>
      <div class="sepbox" style="margin-top:5px"></div>
      <div class="lbl" style="margin-top:6px;padding-left:4px"><i data-i="cube2"></i><span style="margin-left:4px;letter-spacing:-.02px">Defined Surface Regions for compartmentize_sc_only_Segment:</span></div>
      <div class="d-flex justify-content-between" style="margin-top:4px">
       <div class="box d-flex" style="width:499px;height:123px;padding:8px 5px 0">
        <div><div id="regs"></div><div class="d-flex align-items-center lfoot"><svg width="9" height="9" opacity=".7"><use href="#exp"/></svg><div class="grip" style="margin-left:233px"></div></div></div>
        <div class="sb" style="width:14px;height:101px;margin-left:9px;padding-top:29px"><div style="height:20px"></div></div>
       </div>
       <div class="vjoin" style="width:20px"><div class="w"><i data-i="plus"></i></div><div class="w"><i data-i="minus"></i></div><div class="w"><i data-i="x"></i></div></div>
      </div>
      <div class="d-flex" style="margin-top:10px"><span class="lbl" style="width:179px;padding:2px 0 0 8px">Region Name:</span><div class="w fld flex-fill" style="padding-left:7px">sc_07_09_B_sc_07_10</div></div>
      <div class="d-flex justify-content-between" style="margin-top:5px">
       <div class="join d-flex"><div class="w" style="width:129px;padding-left:7px">Assign</div><div class="w" style="width:131px;padding-left:7px">Remove</div></div>
       <div class="join d-flex"><div class="w" style="width:130px;padding-left:7px">Select</div><div class="w" style="width:131px;padding-left:7px">Deselect</div></div>
      </div>
      <div class="box" style="height:61px;margin-top:5px;padding:8px 8px 0"><div class="lbl text-white"><i data-i="td"></i><span style="margin-left:7px">Region Info for Selected Faces</span></div><div class="lbl" style="margin-top:8px;padding-left:4px">sc_07_09_B_sc_07_10</div></div>
     </div>
     <div class="sb" style="width:13px;height:788px;margin:4px 0 0 1px;padding-top:45px"><div class="h-100"></div></div>
    </div>
    <div class="redo"><div class="ph" style="height:20px;padding-left:2px"><div class="tri-d"></div><span style="margin-left:3px;letter-spacing:.07px">Select Faces of Selected Surface Region</span><div class="dots"></div></div></div>
   </aside>
   <div class="view"><svg id="v3d" width="751" height="876" viewBox="581 49 751 876"></svg></div>
  </div>

  <div class="hdr d-flex align-items-center position-relative" style="height:26px;padding-left:9px">
   <div class="w dk" style="width:30px;padding-left:4px"><i data-i="shape"></i><i data-i="ud" class="end"></i></div>
   <span class="mlabel" style="margin-left:12px;width:45px">View</span><span class="mlabel" style="width:51px">Select</span><span class="mlabel" style="width:39px">Add</span><span class="mlabel" style="width:39px">Mesh</span>
   <div class="w dk" style="width:99px;padding-left:3px"><i data-i="edit"></i><span style="margin-left:4px">Edit Mode</span><i data-i="ud" class="end"></i></div>
   <div class="w dk" style="width:34px;margin-left:6px;padding-left:3px"><i data-i="ball"></i><i data-i="ud" class="end"></i></div>
   <div class="w dk" style="width:34px;margin-left:6px;padding-left:3px"><i data-i="pivot"></i><i data-i="ud" class="end"></i></div>
   <div class="join d-flex" style="margin-left:6px">
    <div class="w dk ctr" style="width:20px"><i data-i="axes"></i></div><div class="w blue ctr" style="width:21px"><i data-i="arrow"></i></div><div class="w dk ctr" style="width:20px"><i data-i="arc"></i></div><div class="w dk ctr" style="width:21px"><i data-i="scl"></i></div>
    <div class="w dk" style="width:73px;padding-left:7px">Global<i data-i="ud" class="end"></i></div></div>
   <div class="join d-flex" style="margin-left:5px"><div class="w ctr" style="width:21px"><i data-i="mv"></i></div><div class="w ctr" style="width:20px"><i data-i="me"></i></div><div class="w on ctr" style="width:21px"><i data-i="mf"></i></div></div>
   <div class="w ctr" style="width:20px;margin-left:5px"><i data-i="occl"></i></div>
   <div class="w dk" style="width:35px;margin-left:5px;padding-left:3px"><i data-i="prop"></i><i data-i="ud" class="end"></i></div>
   <div class="join d-flex" style="margin-left:5px"><div class="w ctr" style="width:21px"><i data-i="magnet"></i></div><div class="w dk" style="width:35px;padding-left:3px"><i data-i="snapi"></i><i data-i="ud" class="end"></i></div><div class="w ctr" style="width:21px"><i data-i="snapg"></i></div></div>
   <div class="w ctr" style="width:20px;margin-left:5px"><i data-i="snapt"></i></div>
   <div class="join d-flex" style="margin-left:5px"><div class="w ctr" style="width:20px"><i data-i="cam"></i></div><div class="w ctr" style="width:20px"><i data-i="clap"></i></div></div>
   <svg class="corner" style="left:0;bottom:0"><use href="#cnl"/></svg>
  </div>

  <div style="border-top:1px solid #000;background:#6b6b6b;height:94px" class="position-relative">
   <svg id="tl" width="1332" height="51" class="tl" viewBox="0 0 1332 51"></svg>
   <div class="ruler"><svg id="rul" width="1322" height="12"></svg></div>
   <div class="d-flex align-items-center" style="height:26px;padding:1px 0 0 9px;margin-top:3px;border-top:1px solid #808080">
    <div class="w dk" style="width:30px;padding-left:4px"><i data-i="clock"></i><i data-i="ud" class="end"></i></div>
    <span class="mlabel" style="margin-left:12px;width:45px">View</span><span class="mlabel" style="width:55px">Marker</span><span class="mlabel" style="width:52px">Frame</span><span class="mlabel" style="width:58px">Playback</span>
    <div class="join d-flex"><div class="w ctr" style="width:21px"><i data-i="tlc"></i></div><div class="w ctr" style="width:20px"><i data-i="lock"></i></div></div>
    <div class="join d-flex" style="margin-left:6px"><div class="w num" style="width:116px"><span>Start:</span><span>1</span></div><div class="w num" style="width:112px"><span>End:</span><span>250</span></div></div>
    <div class="w num" style="width:89px;margin-left:6px"><span></span><span>1</span></div>
    <div class="join d-flex" style="margin-left:16px"><div class="w ctr" style="width:21px"><i data-i="first"></i></div><div class="w ctr" style="width:21px"><i data-i="rw"></i></div><div class="w ctr" style="width:20px"><i data-i="back"></i></div><div class="w ctr" style="width:21px"><i data-i="play"></i></div><div class="w ctr" style="width:21px"><i data-i="ff"></i></div><div class="w ctr" style="width:20px"><i data-i="last"></i></div></div>
    <div class="w dk" style="width:114px;margin-left:7px;padding-left:6px">No Sync<i data-i="ud" class="end"></i></div>
    <div class="w ctr" style="width:20px;margin-left:16px"><i data-i="rec2"></i></div>
    <div class="join d-flex" style="margin-left:6px"><div class="w fld" style="width:131px;padding-left:2px"><i data-i="keyset"></i></div><div class="w ctr" style="width:21px"><i data-i="key"></i></div><div class="w ctr" style="width:20px"><i data-i="keyx"></i></div></div>
   </div>
   <svg class="corner" style="right:0;top:0"><use href="#cnr"/></svg>
  </div>
 </div>

 <div class="rightcol d-flex flex-column">
  <div class="hdr d-flex align-items-center position-relative" style="height:26px;padding-left:9px;overflow:hidden">
   <div class="w dk" style="width:30px;padding-left:4px"><i data-i="tree"></i><i data-i="ud" class="end"></i></div>
   <span class="mlabel" style="margin-left:12px;width:45px">View</span><span class="mlabel" style="width:47px">Search</span>
   <div class="w dk" style="width:119px;padding-left:7px">All Scenes<i data-i="ud" class="end"></i></div>
   <div class="w fld" style="width:64px;margin-left:5px;padding-left:3px"><i data-i="lens"></i></div>
   <svg class="corner" style="right:0;top:0"><use href="#cnr"/></svg>
  </div>
  <div class="d-flex position-relative" style="height:268px;background:#727272">
   <div style="width:303px;height:268px;overflow:hidden"><div id="outl" style="margin-top:-5px"></div></div>
   <div class="sb" style="width:12px;height:261px;margin:5px 0 0 1px;padding-top:29px"><div style="height:86px"></div></div>
   <svg class="corner" style="left:0;bottom:0"><use href="#cnl"/></svg>
  </div>
  <div class="hdr d-flex align-items-center position-relative" style="height:28px;padding-left:9px;border-top:1px solid #000;border-bottom:1px solid #888">
   <div class="w dk" style="width:30px;padding-left:4px"><i data-i="props"></i><i data-i="ud" class="end"></i></div>
   <div class="join d-flex" style="margin-left:8px" id="ptabs"></div>
   <svg class="corner" style="right:0;top:0"><use href="#cnr"/></svg>
  </div>
  <div class="d-flex flex-fill position-relative" style="overflow:hidden">
  <div style="width:303px;padding-left:8px">
   <div class="lbl" style="margin-top:9px;padding:2px 0 0 2px"><i data-i="pin"></i><i data-i="scene" style="margin-left:7px"></i><div class="tri-r" style="transform:scale(.6);margin-left:3px"></div><i data-i="ocube" style="margin-left:12px"></i><span style="margin-left:3px">compartmentize_sc_only_Segment</span></div>
   <div class="join d-flex" style="margin-top:16px"><div class="w dk" style="width:32px;padding-left:4px"><i data-i="ocube"></i><i data-i="ud" class="end"></i></div><div class="w fld" style="width:256px;padding-left:6px">compartmentize_sc_only_Segment</div></div>
   <div class="sec" style="margin-top:6px;height:145px"><div class="ph"><div class="tri-d"></div><span style="margin-left:4px">Transform</span><div class="dots"></div></div>
    <div class="d-flex" style="margin:8px 0 0 3px"><span class="lbl" style="width:98px;">Location:</span><span class="lbl" style="width:98px">Rotation:</span><span class="lbl">Scale:</span></div>
    <div class="d-flex" style="gap:9px;margin:-1px 0 0 -4px" id="xyz"></div>
    <div class="d-flex" style="margin:5px 0 0 3px"><span class="lbl" style="width:93px;padding-top:2px">Rotation Mode:</span><div class="w dk" style="width:187px;padding-left:6px">XYZ Euler<i data-i="ud" class="end"></i></div></div>
   </div>
   <div class="sec" style="height:24px"><div class="ph"><div class="tri-r"></div><span style="margin-left:4px">Delta Transform</span><div class="dots"></div></div></div>
   <div class="sec" style="height:24px"><div class="ph"><div class="tri-r"></div><span style="margin-left:4px">Transform Locks</span><div class="dots"></div></div></div>
   <div class="sec" style="height:122px"><div class="ph"><div class="tri-d"></div><span style="margin-left:4px">Relations</span><div class="dots"></div></div>
    <div class="d-flex" style="margin-left:-4px">
     <div style="width:138px;margin-right:9px"><div class="lbl" style="margin-top:7px;padding:2px 0 0 7px">Layers:</div><div class="d-flex justify-content-between" style="margin-top:1px"><div class="lay" style="width:65px"><b style="background:#646464"></b><b></b><b></b><b></b><b></b><b></b><b></b><b></b><b></b><b></b></div><div class="lay" style="width:66px"><b></b><b></b><b></b><b></b><b></b><b></b><b></b><b></b><b></b><b></b></div></div><div class="w num" style="margin-top:10px"><span>Pass Index:</span><span>0</span></div></div>
     <div style="width:140px"><div class="lbl" style="margin-top:7px;padding:2px 0 0 7px">Parent:</div><div class="w fld" style="margin-top:1px;padding-left:3px"><i data-i="ocube"></i><i data-i="drop" class="end"></i></div><div class="w dim" style="margin-top:2px;padding-left:6px">Object<i data-i="ud" class="end"></i></div></div>
    </div>
   </div>
   <div class="sec" style="height:60px"><div class="ph"><div class="tri-d"></div><span style="margin-left:4px">Groups</span><div class="dots"></div></div>
    <div class="join d-flex" style="margin:7px 0 0 -4px;opacity:.55"><div class="w ctr" style="width:267px">Add to Group</div><div class="w ctr" style="width:21px"><i data-i="plus"></i></div></div></div>
   <div class="sec" style="height:173px"><div class="ph"><div class="tri-d"></div><span style="margin-left:4px">Display</span><div class="dots"></div></div>
    <div class="d-flex" style="margin:6px 0 0 -1px">
     <div style="width:147px" id="c1"></div><div style="width:137px" id="c2"></div></div>
    <div class="d-flex" style="margin:4px 0 0 3px"><span class="lbl" style="width:147px;padding-top:2px">Maximum Draw Type:</span><span class="lbl" style="padding-top:2px">Object Color:</span></div>
    <div class="d-flex" style="margin:2px 0 0 -4px"><div class="w dk" style="width:138px;padding-left:6px">Solid<i data-i="ud" class="end"></i></div><div class="w" style="width:140px;margin-left:9px;background:#fff"></div></div>
   </div>
   <div class="sec" style="height:54px"><div class="ph"><div class="tri-d"></div><span style="margin-left:4px">Duplication</span><div class="dots"></div></div>
    <div class="join d-flex" style="margin:6px 0 0 -4px"><div class="w blue ctr" style="width:57px">None</div><div class="w dk ctr" style="width:58px">Frames</div><div class="w dk ctr" style="width:58px">Verts</div><div class="w dk ctr" style="width:58px">Faces</div><div class="w dk ctr" style="width:60px">Group</div></div></div>
  </div>
  <div class="sb" style="width:12px;height:666px;margin:4px 0 0 1px"><div style="height:597px"></div></div>
  <svg class="corner" style="left:0;bottom:0"><use href="#cnl"/></svg>
  </div>
 </div>
</div>

<script>
const $ = id => document.getElementById(id);
const ic = n => `<i data-i="${n}"></i>`;
// shelf tabs: label, height
$('tabs').innerHTML = [['Tools',37],['Create',44],['Shading / UVs',79],['Options',48],['Grease Pencil',80],['CellBlender',68,1],['GAMer',45],['Neuron Launcher',98]]
  .map(t => `<div class="vtab ${t[2]?'act':''}" style="height:${t[1]}px">${t[0]}</div>`).join('');
$('mods').innerHTML = [['wrench','Settings &amp; Preferences'],['script','Scripting'],['params','Parameters'],['ico','Model Objects',1],['mol','Molecules'],['react','Reactions'],['place','Molecule Placement'],['clock','Release Patterns'],['surf','Surface Classes'],['cube2','Assign Surface Classes'],['hash','Partitions'],['plot','Plot Output Settings'],['film','Visualization Settings'],['rec','Run Simulation'],['pin','Show All / Multiple'],['reload','Reload Visualization Data']]
  .map((m,i) => `<div class="w ${m[2]?'on':''}" style="width:${i%2?260:259}px;padding-left:3px">${ic(m[0])}<span class="flex-fill text-center">${m[1]}</span></div>`).join('');
$('objs').innerHTML = ['NM_Surface','compartmentize','compartmentize_sc_only','compartmentize_sc_only_Segment','compartmentize_sc_only_Surface']
  .map((n,i) => `<div class="lrow ${i==3?'sel':''}">${ic('check')}<span>${n}</span><div class="ms-auto d-flex align-items-center">
   ${i==3?`<div class="w" style="width:40px;padding-left:3px">${ic('cw')}</div>`:`<div style="width:40px;padding-left:4px">${ic('cw')}</div>`}
   <div class="w ctr" style="width:20px;margin-left:8px">${ic('lens')}</div><div class="w ctr ${i==3?'':'lowl'}" style="width:20px;margin-left:8px">${ic(i==3?'eye':'eyec')}</div></div></div>`).join('');
$('regs').innerHTML = ['sc_05_07_B_sc_07_10','sc_06_08_B_sc_08_11','sc_06_08_B_sc_08_12','sc_07_09_B_sc_07_10','sc_07_09_B_sc_09_13']
  .map((n,i) => `<div class="lrow ${i==3?'sel':''}">${ic('check')}<span>${n}</span></div>`).join('');
$('outl').innerHTML = ['Lamp','NM_Segment','NM_Surface','cable_model','close_open_mesh','close_open_mesh_closed','compartmentize','compartmentize_sc_only','compartmentize_sc_only_Segment','compartmentize_sc_only_Surface','make_surface_regions','sc_01_02_compartment','sc_02_03_compartment','sc_03_04_compartment']
  .map((n,i) => `<div class="orow"><div class="ocell ${i==7?'hov':''}" style="${i==8?'color:#fff':''}">
   <svg width="26" height="20"><path d="M8.500 0v20M12 9.500h12" stroke="#4a4a4a"/><use href="#exp" x="4" y="5" width="9" height="9"/></svg>
   <div style="margin:-2px 3px 0 -4px;${i==8?'border-radius:50%;box-shadow:0 0 0 1.500px #c79758;background:#c79758':''}">${ic(i?'omesh':'lampo')}</div><span class="nm">${n}</span>
   ${i==8?'':`<div style="width:1px;height:11px;background:#444;margin:0 9px 0 11px;flex:none"></div>${ic(i?'gmesh':'lampg')}`}</div>
   <div style="border-left:1px solid #646464;height:20px;width:25px;padding:1px 0 0 1px">${ic(i==0||i==8?'eye':'eyec')}</div>
   <div style="border-left:1px solid #646464;height:20px;width:15px;padding:1px 0 0 0"><div style="margin-left:-2px">${ic('ptr')}</div></div>
   <div style="border-left:1px solid #646464;height:20px;padding:1px 0 0 1px">${ic('rcam')}</div></div>`).join('');
$('ptabs').innerHTML = ['rcam','rl','scene','world','ocube','chain','spanner','dmesh','mat','tex','part','phys']
  .map((n,i) => `<div class="w ctr ${i==4?'blue':'dk'}" style="width:21px"><div style="${i==4?'':'opacity:.65'}">${ic(n)}</div></div>`).join('');
$('xyz').innerHTML = [['0.00000',89],['0°',89],['1.000',90]].map(v => `<div class="vjoin" style="width:${v[1]}px">${['X:','Y:','Z:'].map(a=>`<div class="w num" style="padding-left:14px"><span>${a}</span><span>${v[0]}</span></div>`).join('')}</div>`).join('');
const chk = (t,on,x='') => `<div class="d-flex align-items-center ${on?'text-white':''}" style="height:22px;padding-top:1px"><div class="chk">${on?'<svg width="14" height="12" style="overflow:visible"><path d="M2 6l3 4 8-9" stroke="#e6e6e6" stroke-width="2.200" fill="none"/></svg>':''}</div><span class="mlabel" style="margin-left:7px">${t}</span>${x}</div>`;
$('c1').innerHTML = chk('Name')+chk('Axis')+chk('Wire')+chk('Draw All Edges',1);
$('c2').innerHTML = chk('Bounds',0,'<div class="w dim ms-auto" style="width:66px;padding-left:6px">Box<i data-i="ud" class="end"></i></div>')+chk('Texture Space')+chk('X-Ray')+chk('Transparency');
// timeline frames: ten frames span 39.04px, frame 0 sits at 226.4
let s = '<rect width="230" height="51" fill="#444"/><rect x="1202" width="130" height="51" fill="#444"/>';
for (let k=-55;k<=280;k+=5){const x=Math.round(226.4+k*3.904)+.5;const dark=k<1||k>249;
  s+=`<path d="M${x} 0v49" stroke="${k%10?(dark?'#3f3f3f':'#6a6a6a'):(dark?'#353535':'#5a5a5a')}"/>`;}
s += '<rect x="229" width="3" height="51" fill="#5fba49"/>';
$('tl').innerHTML = s; s='<circle cx="5" cy="5.500" r="4" fill="#666"/><circle cx="1316" cy="5.500" r="4" fill="none" stroke="#555"/>';
for (let k=0;k<34;k++) s+=`<text x="${(26.500+k*38.8+(k>4?2.500:0)).toFixed(1)}" y="10" text-anchor="middle" class="tk">${-50+k*10}</text>`;
$('rul').innerHTML = s;

// ---- 3D viewport ----
let seed = 7; const R = () => (seed = (seed*16807)%2147483647)/2147483647;
let v = '';
for (let i=0;i<9;i++) v+=`<path d="M${650.5+i*80.45} 49v876" stroke="#424242"/>`;
for (let i=0;i<11;i++) v+=`<path d="M581 ${85.500+i*80.45}h751" stroke="#424242"/>`;
const gray = l => {const g=Math.round(22+R()*l);return `rgb(${g},${g},${g+9})`};
// ring of wedge facets round a hub, squeezed to an ellipse with a ragged rim
function disc(cx,cy,rx,ry,rot,n,light,core){
  let o=`<g transform="translate(${cx} ${cy}) rotate(${rot})" stroke="#000" stroke-width=".9">`;
  const r=[];for(let i=0;i<n;i++)r.push(.82+R()*.26);
  for(let i=0;i<n;i++){const a=i/n*6.283,b=(i+1)/n*6.283,P=(t,q)=>`${(Math.cos(t)*rx*q).toFixed(1)} ${(Math.sin(t)*ry*q).toFixed(1)}`;
    o+=`<path d="M${P(a,r[i])}L${P(b,r[(i+1)%n])} ${P(b,.68)} ${P(a,.68)}z" fill="${gray(light)}"/>`;
    o+=`<path d="M${P(a,.6)}L${P(b,.6)} ${P(b,.15)}z" fill="${R()<core?'#000':gray(light)}"/>`;}
  o+=`<ellipse rx="${rx*.64}" ry="${ry*.64}" fill="none" stroke-width="${Math.min(rx,ry)*.16}"/></g>`;return o;}
// thin jagged strut between two points, brighter facets near both ends
function bar(x1,y1,x2,y2,w,light){const L=Math.hypot(x2-x1,y2-y1),a=Math.atan2(y2-y1,x2-x1)*57.296,n=Math.max(5,Math.round(L/3));
  let t='',b='';for(let i=0;i<=n;i++){const x=i/n*L,e=i==0||i==n?.35:1;t+=`${x.toFixed(1)},${(-w/2*e*(.45+R()*.65)).toFixed(1)} `;b=`${x.toFixed(1)},${(w/2*e*(.45+R()*.65)).toFixed(1)} `+b;}
  let o=`<g transform="translate(${x1} ${y1}) rotate(${a})"><polygon points="${t}${b}" fill="#050506" stroke="#000" stroke-width=".7"/>`;
  for(let i=0;i<n*1.3;i++){const x=R()*L*.92,y=(R()-.5)*w*.6;o+=`<path d="M${x.toFixed(1)} ${y.toFixed(1)}l${(1+R()*2).toFixed(1)} ${(R()*2-1).toFixed(1)} 0 1.300z" fill="${gray(light)}"/>`;}
  const q=(w*.28).toFixed(1);o+=`<path d="M1.500-${q}h3.500l-1 ${(w*.5).toFixed(1)}h-2.500zM${(L-5).toFixed(1)}-${q}h3.500v${q}l-3 1z" fill="${gray(light)}"/>`;
  return o+'</g>';}
v += disc(650.5,224.500,12.500,20,32,16,60,.85)+bar(641,238,660,211,15,60)+'<path d="M656 208l6-1 4 6 1 6-4 2-2-6zM652 232l5-1-1 7-6 3z" fill="#4a4a56" stroke="#000" stroke-width=".8"/>';
v += bar(716,333,748,303,6,90)+bar(815,357,812,375,6,60)+bar(812,374,808,401,5,90)+bar(807,372.500,817,372.500,3,60);
v += disc(889,341,8.500,19,-33,16,80,.85)+bar(879,328,902,357,12,70)+'<path d="M878 326l8-1 4 3-3 4-8 2z" fill="#5c5c68" stroke="#000" stroke-width=".8"/><path d="M895 356l10 3-11 1z" fill="#777" stroke="#000" stroke-width=".6"/>';
v += disc(972,361.500,13.500,13.500,0,18,140,.5)+'<path d="M972 358l14-4-4 9-9 2z"/><path d="M960 350l5-4 1 4zM976 375l6-2-4 4z" fill="#aaa"/>';
v += disc(973,257,7.500,23,-28,16,70,.85)+bar(964,242,983,274,11,60)+'<path d="M961 241l4-6h5l2 6-6 3z" fill="#4a4a52" stroke="#000" stroke-width=".8"/>';
v += bar(1030,276,1066,241,6,120);
v += disc(1052,313,22,22,0,26,55,.6)+bar(1035,340,1075,329,8,60)+disc(1053,339,11,7,0,14,70,.5);
// selected cap
v += '<path d="M1029 307l3-10 5-5 5-3 7-1 9 1 6 3 4 8 7 2-1 6z" fill="#8c7258" stroke="#f79420"/><path d="M1033 304q5-10 19-10t19 10l-3 3h-32z" fill="#ff9412"/>';
for(let i=0;i<17;i++){const a=Math.PI*(1+i/16);v+=`<path d="M1052 306L${(1052+Math.cos(a)*21).toFixed(1)} ${(306+Math.sin(a)*16).toFixed(1)}" stroke="${i%2?'#ffb04a':'#a8743c'}" stroke-width=".8"/>`;}
v += '<path d="M1038 306h27v2q-13 7-27 0z" fill="#000"/>';
v += disc(1051.500,416,12,21,0,18,45,.9)+'<path d="M1048 397h7v4h-7z" fill="#0a0a0c"/>';
v += bar(878,427,914,459,7,90);
v += '<path d="M817 528l8-9 12-13 12-10 14-8 6-8 10-6 8-6 7 5-3 8-8 4-6 7-13 6-9 10-14 8-13 8z" fill="#060608" stroke="#000"/>';
v += '<path d="M830 515l12-11 13-8-5 8-11 7-8 7zM868 480l6-3 1 4-5 3z" fill="#5a5a66" stroke="#000" stroke-width=".7"/><path d="M826 521l10-5-8 7z" fill="#333"/>';
v += bar(824,522,862,494,6,110)+bar(858,494,890,472,11,60)+bar(870,460,898,474,7,90)+bar(890,471,912,478,5,90)+bar(880,491,909,501,5,90)+'<path d="M870 459l7 2 4 5-6 1z" fill="#52525c" stroke="#000"/>';
v += disc(731.500,544,5,7.500,-38,10,20,.95)+disc(649.500,600,5.500,8,-35,10,20,.95)+'<path d="M642 596l6-4 1 2-4 3zM733 549l5-3-4 6z"/>';
v += bar(720,632,741,663,10,80)+disc(729,643,5.500,10,-30,10,60,.8)+'<path d="M718 631l4-2 4 3-3 4z" fill="#6a6a74" stroke="#000" stroke-width=".8"/>'+bar(874,612.500,907,619,7,80);
// large disc: rim outline resampled into wedges round an off-centre hub
{const rim=[[1092,421],[1102,414],[1108,412.500],[1121,410],[1130,413],[1145,415],[1157,420],[1160,430],[1162,443],[1160,457],[1152,468],[1143,477],[1133,480.500],[1122,477],[1113,469],[1103,461.500],[1097,452],[1092,440]];
 const pts=[];rim.forEach((p,i)=>{const q=rim[(i+1)%rim.length];for(let t=0;t<1;t+=.34)pts.push([p[0]+(q[0]-p[0])*t+R()*1.6-.8,p[1]+(q[1]-p[1])*t+R()*1.6-.8]);});
 const C=[1133,445],n=pts.length;
 v+=`<polygon points="${pts.join(' ')}"/>`;
 for(let i=0;i<n;i++){const A=pts[i],B=pts[(i+1)%n],m=(p,t)=>`${(C[0]+(p[0]-C[0])*t).toFixed(1)} ${(C[1]+(p[1]-C[1])*t).toFixed(1)}`;
  const hi=i<15||i>46,base=hi?62:34,g=Math.round(base+R()*(hi?60:45)),h=Math.round(base+R()*40);
  v+=`<g stroke="#000" stroke-width=".7"><path d="M${m(A,1)}L${m(B,1)} ${m(B,.72)} ${m(A,.72)}z" fill="rgb(${g},${g},${g+9})"/><path d="M${m(A,.64)}L${m(B,.64)} ${m(B,.06)}z" fill="${i%4==0?'#000':`rgb(${h},${h},${h+9})`}"/></g>`;}
 v+='<path d="M1107 431q8-10 27-8M1105 434q-1 26 15 34 12 5 22-1 9-10 9-30" fill="none" stroke="#000" stroke-width="2.800"/><path d="M1146 414l11 5-15 17-9 10-3-5z"/><path d="M1137 449l16 16-9 10zM1131 455h4l2 25h-7zM1120 452l8-8-12 21-6 8z"/>';}
v += disc(1294,461,11,33,-14,24,50,.8)+bar(1285,438,1304,488,9,60)+'<path d="M1290 482l6-2 2 8-8 0z" fill="#999" stroke="#000" stroke-width=".7"/><path d="M1300 483l8 6-3 3-7 1z"/>';
// manipulator
v += '<circle cx="1051" cy="299.500" r="15" fill="none" stroke="#fff" stroke-width="1.200"/><path d="M1050.500 284v-52" stroke="#1ac01a" stroke-width="1.300"/><path d="M1050.700 217l4.700 17h-9.400z" fill="#00dc00"/><path d="M1066 299.500h52" stroke="#d00000" stroke-width="1.300"/><path d="M1134 299.700l-17-4.700v9.400z" fill="#e00000"/>';
v += '<path d="M606 899v-25" stroke="#33a533" stroke-width="2"/><path d="M606 898.500h26" stroke="#b41818" stroke-width="2"/><text x="608" y="872" fill="#33b533">y</text><text x="633" y="897" fill="#8f1c1c">x</text>';
v += '<text x="600" y="70" fill="#fff">Top Ortho</text><text x="650" y="914.500" fill="#fff">(1) compartmentize_sc_only_Segment</text>';
v += '<rect x="1317" y="71" width="14" height="14" rx="3" fill="#2b2b2b"/><path d="M1324 75v6M1321 78h6" stroke="#999" stroke-width="1.500"/><use href="#cnr" x="1320" y="49" width="12" height="12"/>';
$('v3d').innerHTML = v;

document.querySelectorAll('i[data-i]').forEach(e => {const n=e.dataset.i;
  e.outerHTML = `<svg class="${n=='ud'?'ud':'ic'} ${e.className}" style="${e.getAttribute('style')||''}"><use href="#${n}"/></svg>`;});
// digits are set wider than the letters around them
document.querySelectorAll('.lrow>span,.nm,.w,.w.num>span,.lbl,header .mlabel').forEach(el => {
  [...el.childNodes].filter(t => t.nodeType==3 && /\d/.test(t.data)).forEach(t => {
    const h = document.createElement('span');
    h.innerHTML = t.data.replace(/\d+/g, d => `<span class="dg">${d}</span>`);
    t.replaceWith(h);
  });
});
</script>
</body>
</html>
